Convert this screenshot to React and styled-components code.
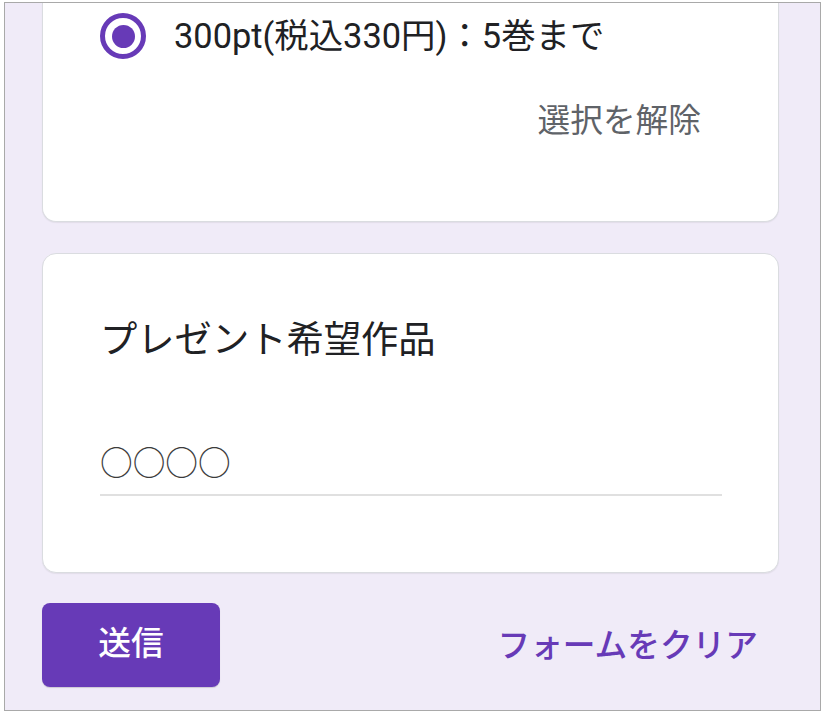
import React from "react";
import styled, { createGlobalStyle } from "styled-components";

const GlobalStyle = createGlobalStyle`
  html, body {
    margin: 0;
    padding: 0;
    background: #ffffff;
  }
  body {
    font-family: "Roboto", "Noto Sans CJK JP", sans-serif;
  }
`;

const PURPLE = "#673ab7";

const Frame = styled.div`
  box-sizing: border-box;
  margin: 2px 0 0 4px;
  width: 817px;
  height: 709px;
  border: 1px solid #a9a9a9;
  background: #f0ebf8;
  overflow: hidden;
  display: flex;
  flex-direction: column;
  padding: 0 41px 0 37px;
`;

const Card = styled.section`
  box-sizing: border-box;
  background: #ffffff;
  border: 1px solid #dadce0;
  border-radius: ${(p) => (p.$cut ? "0 0 14px 14px" : "14px")};
  border-top: ${(p) => (p.$cut ? "none" : "1px solid #dadce0")};
  box-shadow: 0 1px 1px rgba(60, 64, 67, 0.08);
  padding: ${(p) => p.$pad};
  margin-bottom: ${(p) => p.$gap || "0"};
  display: flex;
  flex-direction: column;
`;

const OptionRow = styled.label`
  display: flex;
  align-items: center;
  gap: 28px;
  padding-left: 20px;
`;

const Radio = styled.span`
  box-sizing: border-box;
  width: 46px;
  height: 46px;
  border-radius: 50%;
  border: 5px solid ${PURPLE};
  display: flex;
  align-items: center;
  justify-content: center;
  flex-shrink: 0;

  &::after {
    content: "";
    width: 23px;
    height: 23px;
    border-radius: 50%;
    background: ${PURPLE};
  }
`;

const OptionText = styled.span`
  font-size: 34.4px;
  line-height: 46px;
  color: #202124;
`;

const ClearRow = styled.div`
  display: flex;
  justify-content: flex-end;
  margin-top: 19px;
`;

const TextButton = styled.button`
  border: none;
  background: transparent;
  height: 84px;
  padding: 0 21px 6px;
  font-family: "Roboto", "Noto Sans CJK JP", sans-serif;
  font-size: 32.7px;
  font-weight: ${(p) => p.$weight || 400};
  color: ${(p) => p.$color || "#5f6368"};
  cursor: pointer;
`;

const Title = styled.h2`
  margin: 0;
  font-size: 37.3px;
  line-height: 52px;
  font-weight: 400;
  color: #202124;
  padding-left: 20px;
`;

const Field = styled.div`
  margin: 75px 0 0 20px;
  padding-bottom: 7px;
  border-bottom: 2px solid #e0e0e0;
  font-size: 32.7px;
  line-height: 46px;
  color: #3c3c3c;
`;

const Actions = styled.div`
  display: flex;
  align-items: center;
  justify-content: space-between;
  margin-top: 30px;
`;

const Submit = styled.button`
  box-sizing: border-box;
  width: 178px;
  height: 84px;
  border: none;
  border-radius: 8px;
  background: ${PURPLE};
  color: #ffffff;
  font-family: "Roboto", "Noto Sans CJK JP", sans-serif;
  font-size: 32.7px;
  font-weight: 500;
  padding: 0 0 10px;
  box-shadow: 0 1px 1px rgba(0, 0, 0, 0.15);
  cursor: pointer;
`;

export default function App() {
  return (
    <>
      <GlobalStyle />
      <Frame>
        <Card $cut $pad="10px 56px 59px 37px" $gap="31px">
          <OptionRow>
            <Radio />
            <OptionText>300pt(税込330円)：5巻まで</OptionText>
          </OptionRow>
          <ClearRow>
            <TextButton>選択を解除</TextButton>
          </ClearRow>
        </Card>

        <Card $pad="60px 56px 76px 37px">
          <Title>プレゼント希望作品</Title>
          <Field>○○○○</Field>
        </Card>

        <Actions>
          <Submit>送信</Submit>
          <TextButton $color={PURPLE} $weight={500}>
            フォームをクリア
          </TextButton>
        </Actions>
      </Frame>
    </>
  );
}
